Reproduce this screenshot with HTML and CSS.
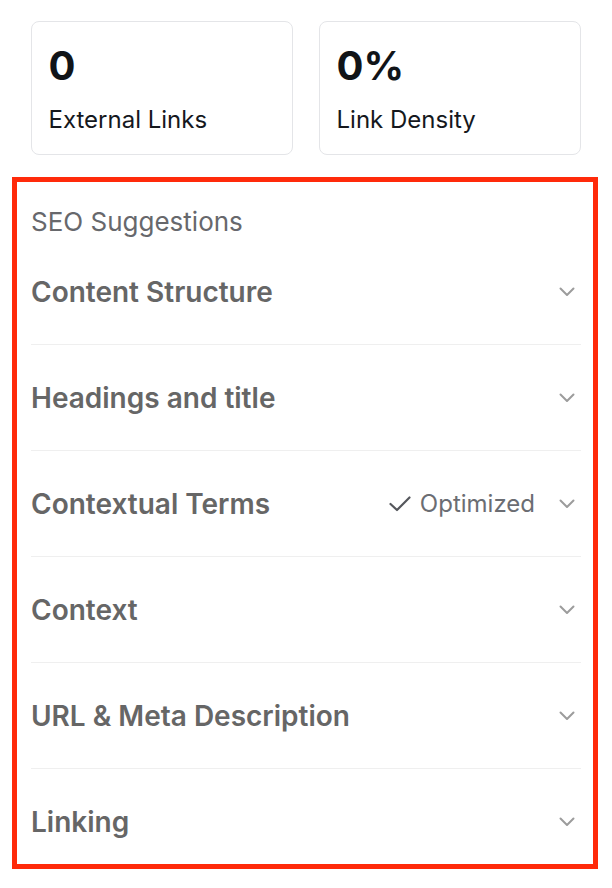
FILE: index.html
```html
<!DOCTYPE html>
<html>
<head>
<meta charset="utf-8">
<link rel="stylesheet" href="styles.css">
</head>
<body>
<div class="page">
  <div class="stats">
    <div class="card">
      <div class="value">0</div>
      <div class="label">External Links</div>
    </div>
    <div class="card">
      <div class="value">0%</div>
      <div class="label">Link Density</div>
    </div>
  </div>
  <div class="panel">
    <div class="panel-title">SEO Suggestions</div>
    <div class="row"><span class="row-title">Content Structure</span><span class="right"><svg class="chev" viewBox="0 0 16 10"><path d="M1.5 1.5 L8 8 L14.5 1.5"/></svg></span></div>
    <div class="row"><span class="row-title">Headings and title</span><span class="right"><svg class="chev" viewBox="0 0 16 10"><path d="M1.5 1.5 L8 8 L14.5 1.5"/></svg></span></div>
    <div class="row"><span class="row-title">Contextual Terms</span><span class="right"><span class="status"><svg class="check" viewBox="0 0 22 16"><path d="M1.5 8 L8 14 L20.5 1.5"/></svg>Optimized</span><svg class="chev" viewBox="0 0 16 10"><path d="M1.5 1.5 L8 8 L14.5 1.5"/></svg></span></div>
    <div class="row"><span class="row-title">Context</span><span class="right"><svg class="chev" viewBox="0 0 16 10"><path d="M1.5 1.5 L8 8 L14.5 1.5"/></svg></span></div>
    <div class="row"><span class="row-title">URL &amp; Meta Description</span><span class="right"><svg class="chev" viewBox="0 0 16 10"><path d="M1.5 1.5 L8 8 L14.5 1.5"/></svg></span></div>
    <div class="row"><span class="row-title">Linking</span><span class="right"><svg class="chev" viewBox="0 0 16 10"><path d="M1.5 1.5 L8 8 L14.5 1.5"/></svg></span></div>
  </div>
</div>
</body>
</html>
```
FILE: styles.css
```css
* { box-sizing: border-box; }
html, body { margin: 0; padding: 0; background: #ffffff; }
body { font-family: Inter, "Noto Sans", sans-serif; }
.page { width: 612px; height: 888px; overflow: hidden; padding-top: 21px; }
.stats { display: flex; gap: 26px; margin-left: 31px; width: 550px; }
.card {
  flex: 1;
  height: 134px;
  border: 1.5px solid #e4e5e8;
  border-radius: 8px;
  padding: 20px 17px 0 16.5px;
}
.value { font-size: 40px; font-weight: 700; line-height: 48px; color: #111418; }
.label { font-size: 24px; line-height: 32px; color: #15181d; margin-top: 14px; }
.panel {
  margin-top: 22px;
  margin-left: 12px;
  width: 586px;
  height: 692px;
  overflow: hidden;
  border: 5px solid #ff2a0a;
  padding: 0 12px 0 14px;
}
.panel-title { font-size: 26px; color: #67686c; line-height: 32px; padding-top: 24px; height: 57px; }
.row {
  display: flex;
  align-items: center;
  justify-content: space-between;
  height: 106px;
  border-bottom: 1.5px solid #efefef;
}
.row-title { font-size: 28px; font-weight: 600; color: #666666; }
.right { display: flex; align-items: center; padding-right: 6px; }
.status { display: flex; align-items: center; font-size: 24px; color: #6b6d73; margin-right: 24px; }
.check { width: 22px; height: 16px; margin-right: 9px; fill: none; stroke: #55575c; stroke-width: 2.2; stroke-linecap: round; stroke-linejoin: round; }
.chev { width: 16px; height: 10px; fill: none; stroke: #9c9c9c; stroke-width: 2; stroke-linecap: round; stroke-linejoin: round; }
```
